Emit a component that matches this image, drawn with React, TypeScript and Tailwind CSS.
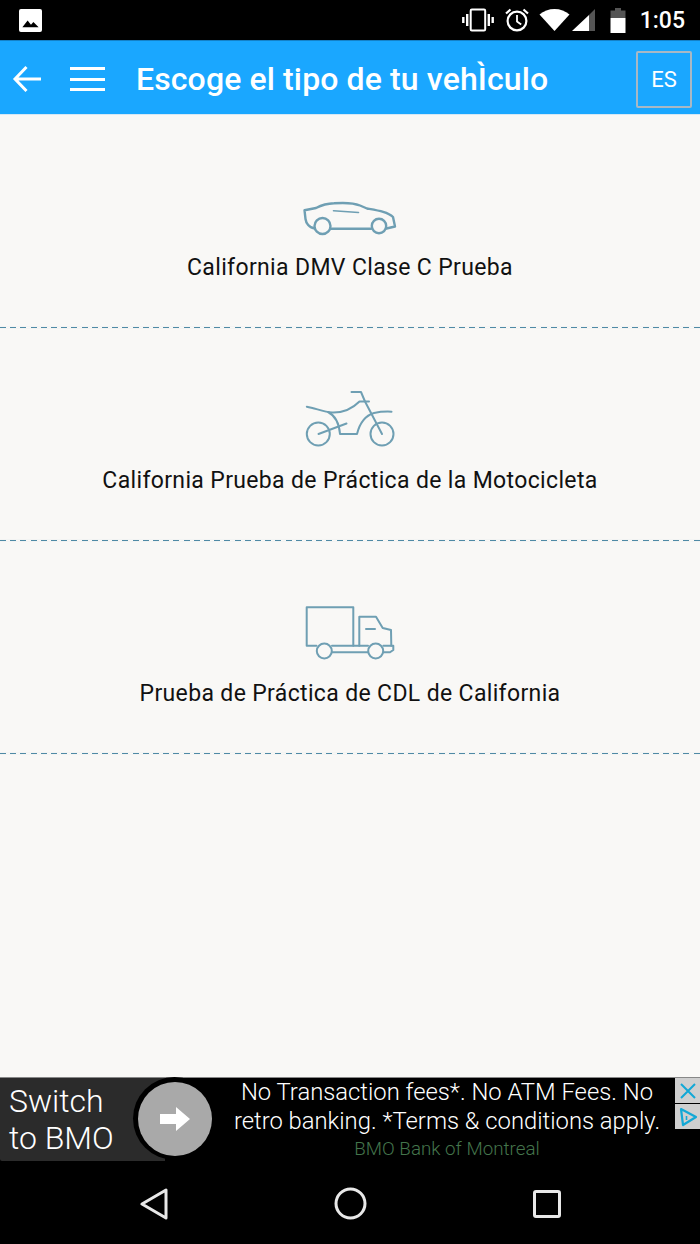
import React from "react";

const rows = [
  { label: "California DMV Clase C Prueba", icon: "car" },
  { label: "California Prueba de Práctica de la Motocicleta", icon: "moto" },
  { label: "Prueba de Práctica de CDL de California", icon: "truck" },
];

function Car() {
  return (
    <svg width="100" height="64" viewBox="300 173 100 64" fill="none" stroke="#6f9fb3" strokeWidth="2.4" strokeLinecap="round" strokeLinejoin="round">
      <path d="M315 228.5C309 228 306 223 305.5 219L304.5 210.2L316 208C321 205.5 328 203.5 334 203.3C345 202.5 354 203 360 205.5L367 208.5C378 210.5 388 212 393 217L395 226.5L386.5 228.5" />
      <path d="M330.5 228.7H371" />
      <path d="M333.5 210.8L358.5 212.5" strokeWidth="1.6" />
      <circle cx="322.5" cy="226" r="8" />
      <circle cx="379" cy="226" r="7.2" />
    </svg>
  );
}

function Moto() {
  return (
    <svg width="100" height="64" viewBox="300 386 100 64" fill="none" stroke="#6f9fb3" strokeWidth="2" strokeLinecap="round" strokeLinejoin="round">
      <circle cx="318.3" cy="434" r="11.5" />
      <circle cx="382" cy="434" r="11.5" />
      <path d="M351.5 392H361L365 401.5L382 434" />
      <path d="M306.8 406.7C316 408.5 324 412 332 412.5C345 413 353 408 359.5 401.5H369" />
      <path d="M328 412C334 415 339 422 340 434H357C359.5 424 364 416 374 413C381 411.5 387 411.5 391.5 411.7" />
      <path d="M318.5 434L346.5 423.5" />
    </svg>
  );
}

function Truck() {
  return (
    <svg width="100" height="64" viewBox="300 599 100 64" fill="none" stroke="#6f9fb3" strokeWidth="2" strokeLinecap="round" strokeLinejoin="round">
      <path d="M316.5 645.7H306.7V607.3H353.3V645.7" />
      <path d="M332 645.7H368" />
      <path d="M332 652.3H368" />
      <path d="M359.3 645.7V616.7H376L382.7 628L391 630L391.3 645.7" />
      <path d="M383.3 645.7H393.3V650L390 652.3H383.5" />
      <path d="M366 629H375" />
      <circle cx="324.3" cy="651" r="7.5" />
      <circle cx="375.7" cy="651" r="7.5" />
    </svg>
  );
}

function StatusBar() {
  return (
    <div className="h-[40px] bg-black flex items-center justify-between pl-[19px] pr-[15px]">
      <svg width="23" height="23" viewBox="0 0 24 24">
        <path fill="#fff" d="M2 0h20a2 2 0 0 1 2 2v20a2 2 0 0 1-2 2H2a2 2 0 0 1-2-2V2a2 2 0 0 1 2-2z" />
        <path fill="#000" d="M3.5 19l5.5-7 3.5 4.5 2.5-3 5.5 5.5z" />
      </svg>
      <div className="flex items-center">
        <svg width="32" height="24" viewBox="0 0 32 24" fill="none" stroke="#fff" className="mr-[10px]">
          <rect x="8.7" y="1.5" width="14.5" height="21" rx="1.2" strokeWidth="2" />
          <path d="M5.2 6v12M26.8 6v12" strokeWidth="2.4" />
          <path d="M1.3 9v6M30.7 9v6" strokeWidth="2.4" />
        </svg>
        <svg width="26" height="26" viewBox="0 0 26 26" fill="none" stroke="#fff" strokeWidth="2.2" className="mr-[9px]">
          <circle cx="13" cy="14" r="9.4" />
          <path d="M13 8v6.5l4.2 3" strokeWidth="1.8" />
          <path d="M2 6.5L6.5 2.5M24 6.5L19.5 2.5" />
        </svg>
        <svg width="31" height="24" viewBox="0 0 31 24" className="mr-[2px]">
          <path fill="#fff" d="M0.5 6.5C4.5 3 10 1 15.5 1s11 2 15 5.5L15.5 23z" />
        </svg>
        <svg width="24" height="24" viewBox="0 0 24 24" className="mr-[14px]">
          <path fill="#fff" d="M0 23L17 7v16z" />
          <path fill="#555" d="M17 7L23 1v22h-6z" />
        </svg>
        <svg width="16" height="25" viewBox="0 0 16 25" className="mr-[14px]">
          <path fill="#555" d="M5 0h6v2.5h4.5V10H.5V2.5H5z" />
          <path fill="#fff" d="M.5 10h15v15H.5z" />
        </svg>
        <span className="text-[23px] leading-none text-white font-['Roboto',sans-serif] font-medium">1:05</span>
      </div>
    </div>
  );
}

function Header() {
  return (
    <div className="h-[74px] pt-[3px] bg-[#1aa7ff] border-t border-[#1481c8] flex items-center">
      <svg width="30" height="30" viewBox="0 0 30 30" fill="none" stroke="#fff" strokeWidth="3" className="ml-[12px] shrink-0">
        <path d="M29 15H3M14.5 3L3 15l11.5 12" />
      </svg>
      <div className="ml-[28px] w-[35px] h-[24px] flex flex-col justify-between shrink-0">
        <div className="h-[3px] bg-white" />
        <div className="h-[3px] bg-white" />
        <div className="h-[3px] bg-white" />
      </div>
      <div className="ml-[31px] text-[32px] tracking-[0.12px] leading-none text-white font-medium font-['Roboto',sans-serif] whitespace-nowrap">
        Escoge el tipo de tu vehÌculo
      </div>
      <div className="ml-auto mr-[8px] w-[56px] h-[57px] pt-[1px] border-2 border-[#a9b8c4] rounded-[2px] flex items-center justify-center text-white text-[22px] font-['Roboto',sans-serif]">
        ES
      </div>
    </div>
  );
}

export default function App() {
  return (
    <div className="w-[700px] h-[1244px] flex flex-col bg-[#f9f8f6] overflow-hidden font-['Roboto',sans-serif]">
      <StatusBar />
      <Header />
      <div className="flex-1 border-t border-[#d5e8f5]">
        {rows.map((r) => (
          <div key={r.label} className="h-[213px] flex flex-col items-center">
            <div className="h-[64px] mt-[58px] mb-[18px] flex items-center justify-center">
              {r.icon === "car" && <Car />}
              {r.icon === "moto" && <Moto />}
              {r.icon === "truck" && <Truck />}
            </div>
            <div className="text-[23px] leading-[26px] text-[#111] tracking-[0.35px] whitespace-nowrap">{r.label}</div>
            <div className="mt-auto w-full h-[1px] bg-[repeating-linear-gradient(90deg,#4f8aa5_0,#4f8aa5_6px,transparent_6px,transparent_10.2px)] shadow-[0_0_1px_#9cc3d680]" />
          </div>
        ))}
      </div>
      <div className="h-[84px] border-t border-[#888] bg-black flex relative shrink-0">
        <div className="w-[165px] h-[83px] bg-[#2b2b2b] pl-[9px] pt-[5px] text-[32px] leading-[37px] text-white font-light rounded-bl-[2px]">
          <div>Switch</div>
          <div>to BMO</div>
        </div>
        <div className="absolute left-[133px] -top-[1px] w-[83px] h-[83px] rounded-full bg-black flex items-center justify-center">
          <div className="w-[74px] h-[74px] ml-[1px] rounded-full bg-[#a9a9a9] flex items-center justify-center">
            <svg width="30" height="24" viewBox="0 0 30 24">
              <path fill="#fff" d="M0 7h16V0l14 12-14 12v-7H0z" />
            </svg>
          </div>
        </div>
        <div className="flex-1 flex flex-col items-center text-white pl-[65px] pr-[36px]">
          <div className="text-[23.8px] leading-[29px] font-light whitespace-nowrap">No Transaction fees*. No ATM Fees. No</div>
          <div className="text-[23.8px] leading-[29px] font-light whitespace-nowrap">retro banking. *Terms &amp; conditions apply.</div>
          <div className="text-[18.8px] leading-[26px] font-light text-[#44754c] whitespace-nowrap">BMO Bank of Montreal</div>
        </div>
        <div className="absolute right-0 top-0 w-[25px] flex flex-col gap-[1px]">
          <div className="h-[25px] bg-[#cfcfcf] flex items-center justify-center">
            <svg width="16" height="16" viewBox="0 0 16 16" stroke="#12a8d6" strokeWidth="2" fill="none"><path d="M1 1l14 14M15 1L1 15" /></svg>
          </div>
          <div className="h-[25px] bg-[#cfcfcf] flex items-center justify-center">
            <svg width="20" height="20" viewBox="0 0 20 20" stroke="#12a8d6" strokeWidth="2.2" fill="none" strokeLinejoin="round"><path d="M3 2l15 8-13 8z" /><path d="M8.5 9v4" strokeWidth="1.6" /></svg>
          </div>
        </div>
      </div>
      <div className="h-[83px] pt-[2px] bg-black flex items-center shrink-0">
        <div className="w-full flex items-center justify-between pl-[140px] pr-[139px]">
          <svg width="28" height="32" viewBox="0 0 28 32" fill="none" stroke="#e8e8e8" strokeWidth="3" strokeLinejoin="round"><path d="M26 2v28L2 16z" /></svg>
          <svg width="33" height="33" viewBox="0 0 33 33" fill="none" stroke="#e8e8e8" strokeWidth="3"><circle cx="16.5" cy="16.5" r="14.5" /></svg>
          <svg width="28" height="28" viewBox="0 0 28 28" fill="none" stroke="#e8e8e8" strokeWidth="3" strokeLinejoin="round"><rect x="1.5" y="1.5" width="25" height="25" rx="1.5" /></svg>
        </div>
      </div>
    </div>
  );
}
